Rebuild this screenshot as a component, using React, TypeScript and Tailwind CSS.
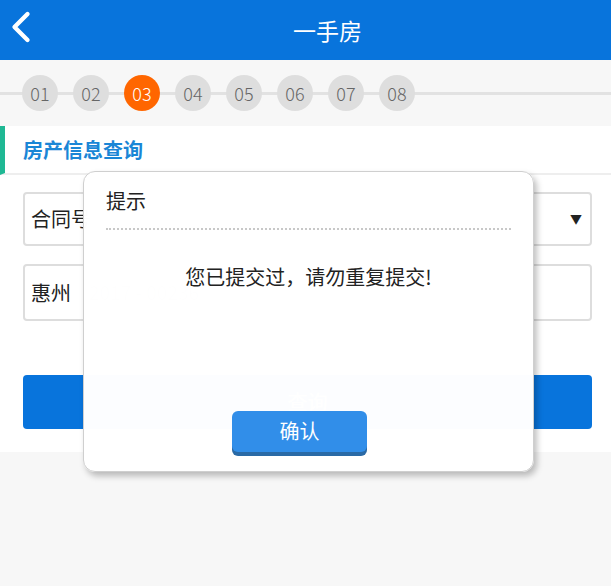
import { ChevronLeft } from "lucide-react";

const steps = ["01", "02", "03", "04", "05", "06", "07", "08"];
const font = "font-['Microsoft_YaHei','Noto_Sans_CJK_SC',sans-serif]";

function StepBar({ current }: { current: number }) {
  return (
    <div className="relative h-[66px] bg-[#f7f7f7]">
      <div className="absolute left-0 right-0 top-[32px] h-[3px] bg-[#e2e2e2]" />
      <div className="relative flex items-center gap-[15px] pl-[22px] pt-[15px]">
        {steps.map((s, i) => (
          <div
            key={s}
            className={`flex h-[36px] w-[36px] items-center justify-center rounded-full text-[18px] font-light ${
              i === current ? "bg-[#ff6600] text-white" : "bg-[#dedede] text-[#666]"
            }`}
          >
            {s}
          </div>
        ))}
      </div>
    </div>
  );
}

function ConfirmDialog() {
  return (
    <div className="absolute left-[83px] top-[171px] flex h-[301px] w-[451px] flex-col rounded-[12px] border border-[#cfcfcf] bg-white/[0.99] px-[22px] shadow-[3px_4px_6px_rgba(0,0,0,0.25)]">
      <div className="border-b-2 border-dotted border-[#c8c8c8] pb-[12px] pt-[14px] text-[20px] leading-[30px] text-[#222]">
        提示
      </div>
      <div className="pt-[32px] text-center text-[20px] leading-[30px] text-[#222]">
        您已提交过，请勿重复提交!
      </div>
      <div className="mt-auto mb-[19px] flex">
        <button className="ml-[126px] h-[41px] w-[135px] rounded-[6px] bg-[#318ee9] pb-[2px] text-[20px] text-white shadow-[0_4px_0_#2a6aa6]">
          确认
        </button>
      </div>
    </div>
  );
}

export default function App() {
  return (
    <div className={`relative h-[586px] w-[611px] overflow-hidden bg-[#f7f7f7] ${font}`}>
      <header className="relative flex h-[60px] items-center justify-center bg-[#0874dc]">
        <ChevronLeft className="absolute left-[-5px] top-[1px] h-[52px] w-[52px] text-white" strokeWidth={2} />
        <h1 className="pl-[44px] text-[23px] text-white">一手房</h1>
      </header>

      <StepBar current={2} />

      <div className="bg-white">
        <div className="flex h-[49px] items-center border-b-2 border-[#eeeeee] border-l-[5px] border-l-[#1fb894] pl-[18px]">
          <h2 className="text-[20px] font-bold text-[#1a86d6]">房产信息查询</h2>
        </div>

        <div className="flex flex-col pl-[23px] pr-[19px] pt-[17px] pb-[23px]">
          <div className="flex h-[54px] items-center justify-between rounded-[4px] border-2 border-[#dddddd] pl-[6px] pr-[8px]">
            <span className="text-[20px] text-[#222]">合同号</span>
            <span className="text-[12px] text-[#222]">▼</span>
          </div>
          <div className="mt-[18px] flex h-[57px] items-center rounded-[4px] border-2 border-[#dddddd] pl-[6px]">
            <span className="text-[20px] text-[#222]">惠州</span>
            <span className="ml-[18px] text-[19px] text-[#bbb]">2017 - 00236</span>
          </div>
          <button className="mt-[54px] h-[54px] rounded-[4px] bg-[#0874dc] text-[20px] text-white">
            查询
          </button>
        </div>
      </div>

      <ConfirmDialog />
    </div>
  );
}
